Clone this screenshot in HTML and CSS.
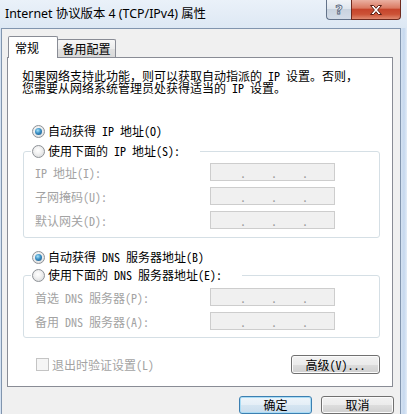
FILE: index.html
```html
<!DOCTYPE html>
<html lang="zh-CN">
<head>
<meta charset="utf-8">
<title>Internet 协议版本 4 (TCP/IPv4) 属性</title>
<link rel="stylesheet" href="styles.css">
</head>
<body>
<div class="win">
  <div class="titlebar">
    <div class="title">Internet 协议版本 4 (TCP/IPv4) 属性</div>
    <div class="caption">
      <div class="cbtn help"><span class="q">?</span></div>
      <div class="cbtn close">
        <svg width="14" height="12" viewBox="0 0 14 12"><path d="M1.5 1.5h3.2L7 4.3l2.3-2.8h3.2L8.6 6l3.9 4.5H9.3L7 7.7l-2.3 2.8H1.5L5.4 6z" fill="#fff" stroke="#5b1d12" stroke-width="1" stroke-linejoin="round"/></svg>
      </div>
    </div>
  </div>
  <div class="client">
    <div class="tabs">
      <div class="tab active">常规</div>
      <div class="tab">备用配置</div>
    </div>
    <div class="panel">
      <div class="desc">
        <div class="line">如果网络支持此功能，则可以获取自动指派的 IP 设置。否则，</div>
        <div class="line">您需要从网络系统管理员处获得适当的 IP 设置。</div>
      </div>

      <div class="opt first"><span class="radio on"></span>自动获得 IP 地址(O)</div>
      <fieldset class="group">
        <legend class="opt"><span class="radio"></span>使用下面的 IP 地址(S):</legend>
        <div class="row"><span class="lbl">IP 地址(I):</span><span class="ip"><i>.</i><i>.</i><i>.</i></span></div>
        <div class="row"><span class="lbl">子网掩码(U):</span><span class="ip"><i>.</i><i>.</i><i>.</i></span></div>
        <div class="row"><span class="lbl">默认网关(D):</span><span class="ip"><i>.</i><i>.</i><i>.</i></span></div>
      </fieldset>

      <div class="opt second"><span class="radio on"></span>自动获得 DNS 服务器地址(B)</div>
      <fieldset class="group dns">
        <legend class="opt"><span class="radio"></span>使用下面的 DNS 服务器地址(E):</legend>
        <div class="row"><span class="lbl">首选 DNS 服务器(P):</span><span class="ip"><i>.</i><i>.</i><i>.</i></span></div>
        <div class="row"><span class="lbl">备用 DNS 服务器(A):</span><span class="ip"><i>.</i><i>.</i><i>.</i></span></div>
      </fieldset>

      <div class="foot">
        <div class="chk"><span class="box"></span>退出时验证设置(L)</div>
        <button class="btn adv">高级(V)...</button>
      </div>
    </div>
    <div class="actions">
      <button class="btn act def">确定</button>
      <button class="btn act">取消</button>
    </div>
  </div>
</div>
</body>
</html>
```

FILE: styles.css
```css
* { box-sizing: border-box; }
html, body { margin: 0; padding: 0; }
body {
  width: 407px;
  height: 414px;
  overflow: hidden;
  font-family: "Noto Sans Mono CJK SC", "Noto Sans CJK SC", "Noto Sans", sans-serif;
  font-size: 12px;
  color: #000;
  background: #d4e2f2;
}
.win {
  width: 407px;
  height: 414px;
  overflow: hidden;
  background: linear-gradient(90deg, #d4e2f2 0, #d4e2f2 401px, #c6d8ee 404px, #e2ecf7 407px);
}

/* title bar */
.titlebar {
  height: 28px;
  display: flex;
  justify-content: space-between;
  align-items: flex-start;
  background: linear-gradient(#eaf1f9, #dde8f4);
}
.title {
  padding: 6px 0 0 5px;
  font-family: "Noto Sans", "Noto Sans CJK SC", sans-serif;
  font-size: 12.4px;
  line-height: 16px;
  white-space: nowrap;
}
.caption { display: flex; margin-right: 6px; }
.cbtn {
  height: 20px;
  display: flex;
  align-items: center;
  justify-content: center;
  border: 1px solid #63738a;
  border-top: none;
}
.help {
  width: 25px;
  border-right: none;
  border-radius: 0 0 0 4px;
  background: linear-gradient(#f1f4f8, #dfe6ee 45%, #c9d3df 50%, #d3dce8);
}
.q {
  font-family: "DejaVu Sans", sans-serif;
  font-weight: bold;
  font-size: 13px;
  line-height: 14px;
  color: #eef2f7;
  -webkit-text-stroke: 0.8px #55647a;
}
.close {
  width: 50px;
  border-color: #6f2a1e;
  border-radius: 0 0 4px 0;
  background: linear-gradient(#eab0a2, #da7a63 42%, #c6452c 50%, #cc5236 75%, #e08a70);
}

/* client area */
.client {
  margin-left: 1px;
  width: 400px;
  height: 386px;
  border: 1px solid #8195ae;
  border-bottom: none;
  background: #f0f0f0;
}
.tabs {
  display: flex;
  align-items: flex-end;
  height: 28px;
  padding-left: 6px;
}
.tab {
  width: 59px;
  height: 18px;
  margin-left: -1px;
  border: 1px solid #898c95;
  border-bottom: none;
  border-radius: 2px 2px 0 0;
  background: linear-gradient(#f7f7f7, #ececec 50%, #e0e0e0 51%, #d9d9d9);
  display: flex;
  align-items: center;
  justify-content: center;
  line-height: 14px;
  white-space: nowrap;
}
.tab.active {
  width: 50px;
  height: 22px;
  margin-left: 0;
  margin-bottom: -1px;
  padding-left: 6px;
  justify-content: flex-start;
  background: #fff;
  position: relative;
  z-index: 1;
}
.panel {
  margin-left: 5px;
  width: 386px;
  height: 330px;
  border: 1px solid #898c95;
  background: #fff;
  padding: 11px 12px 0 14px;
}
.desc { white-space: nowrap; }
.line { line-height: 12px; height: 12px; }
.line + .line { margin-top: 0; }
.desc { padding-top: 1px; height: 25px; }

/* radio options */
.opt {
  display: flex;
  align-items: center;
  gap: 3px;
  height: 16px;
  line-height: 16px;
  margin-left: 10px;
  white-space: nowrap;
}
.opt.first { margin-top: 29px; }
.opt.second { margin-top: 11px; }
.radio {
  width: 13px;
  height: 13px;
  border-radius: 50%;
  border: 1px solid #8e9297;
  background: radial-gradient(circle at 45% 40%, #ffffff 0, #f3f3f3 35%, #d2d4d6 100%);
  display: flex;
  align-items: center;
  justify-content: center;
  flex: none;
}
.radio.on::after {
  content: "";
  width: 7px;
  height: 7px;
  border-radius: 50%;
  background: radial-gradient(circle at 40% 35%, #a8e4fa 0, #3b8fc4 45%, #15507f 100%);
}

/* group boxes */
.group {
  margin: 4px 0 0 1px;
  padding: 0 0 8px;
  width: 357px;
  min-inline-size: 0;
  border: 1px solid #d5dfe5;
  border-radius: 3px;
}
.group.dns { margin-top: 2px; padding-bottom: 7px; }
.group legend.opt {
  margin-left: 7px;
  padding: 0 20px 0 1px;
}
.row {
  display: flex;
  align-items: center;
  height: 18px;
  margin-top: 6px;
  padding-left: 11px;
  color: #a3a3a3;
  white-space: nowrap;
}
.group legend + .row { margin-top: 4px; }
.group.dns legend + .row { margin-top: 5px; }
.lbl { width: 175px; }
.ip {
  width: 125px;
  height: 18px;
  border: 1px solid #cdcdcd;
  background: #f0f0f0;
  display: flex;
  align-items: center;
  padding-left: 4px;
  color: #9a9a9a;
  line-height: 16px;
}
.ip i { width: 31px; text-align: right; font-style: normal; padding-top: 2px; }

/* footer */
.foot {
  display: flex;
  justify-content: space-between;
  align-items: center;
  margin-top: 17px;
  padding-left: 14px;
}
.chk {
  display: flex;
  align-items: center;
  gap: 3px;
  color: #a3a3a3;
  white-space: nowrap;
}
.box {
  width: 13px;
  height: 13px;
  border: 1px solid #c4c4c4;
  background: #f5f5f5;
}
.btn {
  font: inherit;
  color: #000;
  height: 19px;
  padding: 0;
  line-height: 16px;
  border: 1px solid #707070;
  border-radius: 3px;
  background: linear-gradient(#f2f2f2, #ebebeb 50%, #dddddd 51%, #cfcfcf);
  box-shadow: inset 0 0 0 1px #fbfbfb;
  white-space: nowrap;
}
.adv { width: 89px; }
.actions {
  display: flex;
  justify-content: flex-end;
  gap: 9px;
  padding: 9px 6px 0 0;
}
.act { width: 73px; height: 18px; }
.btn.def {
  border-color: #3c7fb1;
  box-shadow: inset 0 0 0 1px #a9dcf5;
  background: linear-gradient(#eef5fa, #e4eef6 50%, #d5e5f1 51%, #cadded);
}
```
